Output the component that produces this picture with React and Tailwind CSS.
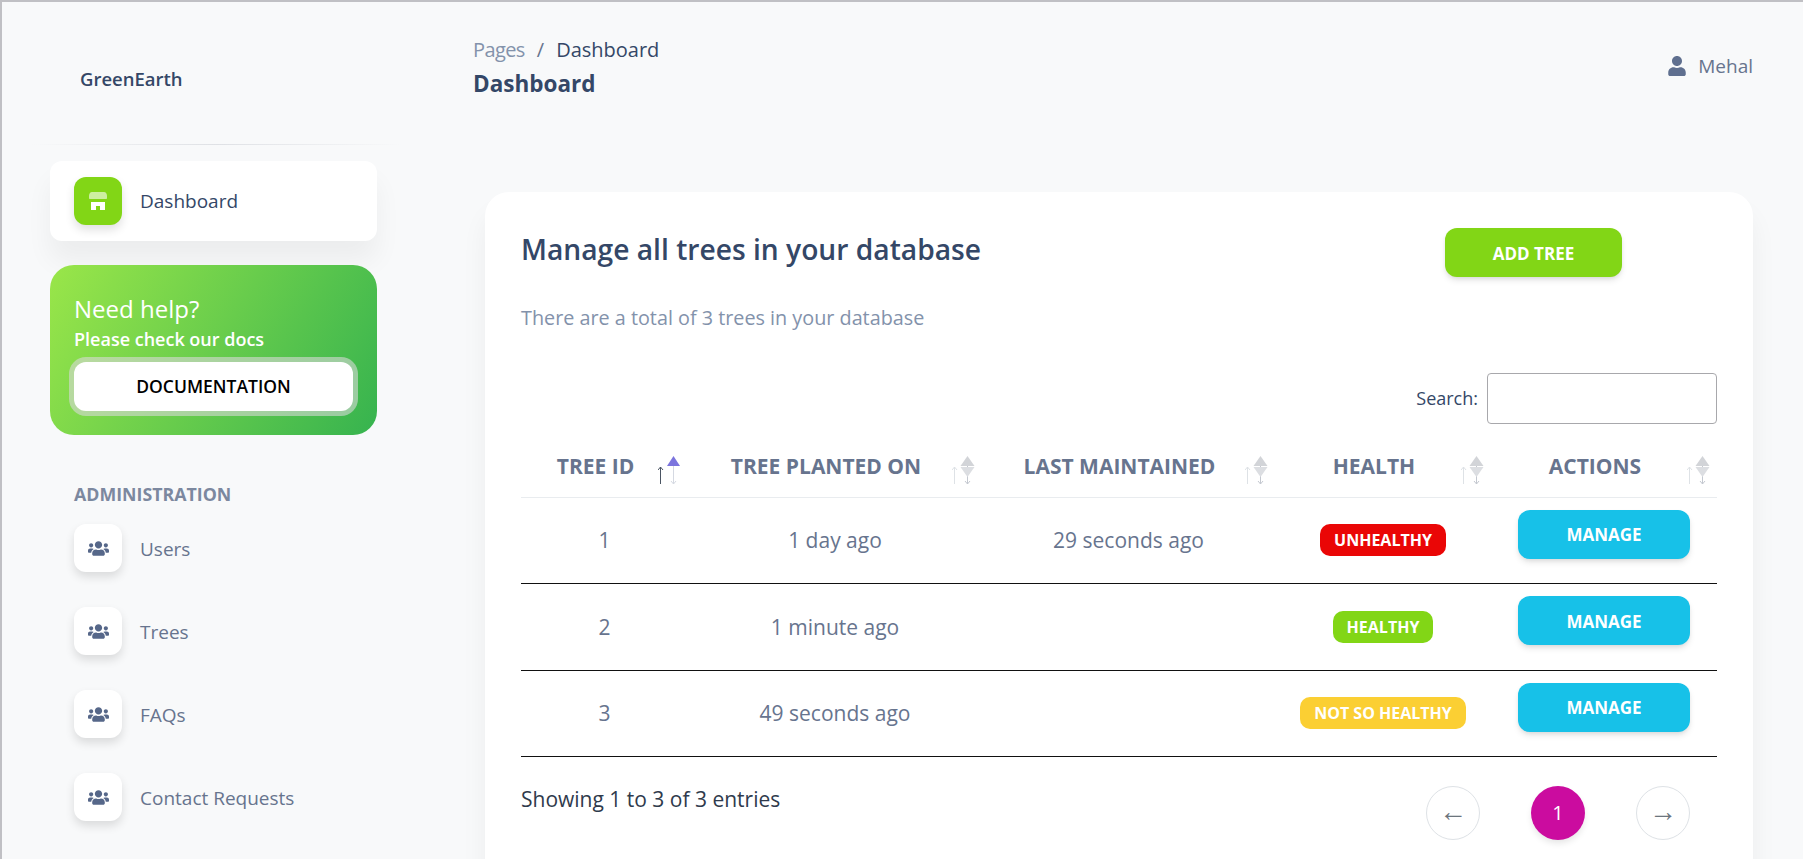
import React from "react";
import { FaUser, FaUsers } from "react-icons/fa";

const menuItems = ["Users", "Trees", "FAQs", "Contact Requests"];

const trees = [
  { id: 1, planted: "1 day ago", maintained: "29 seconds ago", health: "UNHEALTHY", badge: "bg-[#ea0606]", rowH: "h-[86px]" },
  { id: 2, planted: "1 minute ago", maintained: "", health: "HEALTHY", badge: "bg-[#82d616]", rowH: "h-[87px]" },
  { id: 3, planted: "49 seconds ago", maintained: "", health: "NOT SO HEALTHY", badge: "bg-[#fbcf33]", rowH: "h-[86px]" },
];

function ShopIcon() {
  return (
    <svg width="18" height="18" viewBox="0 0 18 18">
      <path d="M3 0h12c2 0 3 2 3 4v2c0 .6-.4 1-1 1H1c-.6 0-1-.4-1-1V4c0-2 1-4 3-4z" fill="#fff" opacity="0.6" />
      <path d="M2 10h14v8h-5v-4H7v4H2z" fill="#fff" />
    </svg>
  );
}

function SortIcon({ active }) {
  return (
    <svg className="absolute right-[6px] top-[25px]" width="24" height="30" viewBox="0 0 24 30">
      <g fill="none" strokeWidth="1">
        <path d="M2.500 29V12M0 15l2.500-3L5 15" stroke={active ? "#4b5563" : "#dee2e6"} />
        <path d="M15.500 29V11M13 26l2.500 3L18 26" stroke={active ? "#d5d9e2" : "#c4c8d0"} />
      </g>
      {active ? (
        <path d="M15.500 1L22 11H9z" fill="#7b74dd" />
      ) : (
        <>
          <path d="M15.500 1L22.500 11H8.500z" fill="#d2d4d8" />
          <path d="M15.500 22L22.500 12H8.500z" fill="#dcdee2" />
        </>
      )}
    </svg>
  );
}

function SidebarLink({ label }) {
  return (
    <div className="flex items-center gap-[18px] pl-[24px]">
      <div className="w-[48px] h-[48px] rounded-[12px] bg-white flex items-center justify-center shadow-[0_5px_10px_rgba(0,0,0,0.12)]">
        <FaUsers className="text-[21px] text-[#566789]" />
      </div>
      <span className="text-[19px] leading-[28px] pt-[2px] text-[#67748e] font-medium">{label}</span>
    </div>
  );
}

export default function App() {
  const headers = ["TREE ID", "TREE PLANTED ON", "LAST MAINTAINED", "HEALTH", "ACTIONS"];

  return (
    <div className="h-screen overflow-hidden flex bg-[#f8f9fa] border-t-2 border-l-2 border-[#c0c0c4] font-['Open_Sans',sans-serif]">
      {/* sidebar */}
      <aside className="w-[425px] shrink-0 pl-[48px]">
        <div className="h-[143px] relative">
          <div className="pl-[30px] pt-[62px] text-[18.500px] leading-[30px] font-semibold text-[#344767]">GreenEarth</div>
          <div className="absolute bottom-0 left-[-18px] w-[370px] h-[1px] bg-linear-to-r from-transparent via-[#dfe1e5] to-transparent"></div>
        </div>

        <div className="w-[327px] mt-[16px] h-[80px] rounded-[12px] bg-white flex items-center gap-[18px] pl-[24px] shadow-[0_20px_27px_rgba(0,0,0,0.05)]">
          <div className="w-[48px] h-[48px] rounded-[12px] bg-[#82d616] flex items-center justify-center shadow-[0_5px_10px_rgba(0,0,0,0.12)]">
            <ShopIcon />
          </div>
          <span className="text-[19px] font-medium text-[#344767]">Dashboard</span>
        </div>

        <div className="w-[327px] h-[170px] mt-[24px] rounded-[24px] pl-[24px] pr-[24px] pt-[29px] bg-linear-[120deg] from-[#9ae649] to-[#36b34f] text-white">
          <div className="text-[24px] leading-[30px]">Need help?</div>
          <div className="text-[18px] leading-[24px] font-semibold mt-[3px]">Please check our docs</div>
          <button className="block w-[279px] h-[49px] mt-[11px] rounded-[12px] bg-white text-[17.500px] font-semibold text-black ring-[5px] ring-[#d8d8d8]/60">
            DOCUMENTATION
          </button>
        </div>

        <div className="pl-[24px] mt-[47px] text-[17.800px] leading-[24px] font-bold text-[#7c889f]">ADMINISTRATION</div>
        <div className="flex flex-col gap-[35px] mt-[18px]">
          {menuItems.map((item) => (
            <SidebarLink key={item} label={item} />
          ))}
        </div>
      </aside>

      {/* main */}
      <main className="flex-1 flex flex-col min-w-0 pr-[50px] pl-[46px]">
        <header className="h-[190px] shrink-0 flex justify-between pt-[33px]">
          <div>
            <div className="text-[20px] leading-[30px] text-[#344767]">
              <span className="text-[#8392ab] tracking-[-0.6px]">Pages</span>
              <span className="text-[#67748e] mx-[12px]">/</span>
              Dashboard
            </div>
            <div className="text-[22.500px] leading-[32px] font-bold text-[#344767] mt-[3px]">Dashboard</div>
          </div>
          <div className="flex items-center gap-[11px] h-[44px] mt-[9px] text-[#67748e] text-[19px]">
            <FaUser className="text-[20px] text-[#5f6f8f]" />
            Mehal
          </div>
        </header>

        <section className="h-[720px] shrink-0 ml-[12px] rounded-[24px] bg-white pl-[36px] pr-[36px] shadow-[0_20px_27px_rgba(0,0,0,0.05)]">
          <div className="flex justify-between items-start pt-[36px]">
            <div>
              <h1 className="text-[28.200px] leading-[40px] mt-[1px] font-semibold text-[#344767]">Manage all trees in your database</h1>
              <p className="text-[19.800px] leading-[30px] mt-[34px] text-[#8392ab]">There are a total of 3 trees in your database</p>
            </div>
            <button className="w-[177px] h-[49px] pt-[2px] mr-[95px] rounded-[12px] bg-[#82d616] text-white text-[17px] font-bold shadow-[0_4px_7px_-1px_rgba(0,0,0,0.11),0_2px_4px_-1px_rgba(0,0,0,0.07)]">
              ADD TREE
            </button>
          </div>

          <div className="flex justify-end items-center gap-[9px] mt-[40px]">
            <label className="text-[18px] text-[#344767]">Search:</label>
            <input className="w-[230px] h-[51px] rounded-[4px] border border-[#a8a8ac] bg-white" />
          </div>

          <table className="w-[1196px] table-fixed border-collapse mt-[6px]">
            <colgroup>
              <col className="w-[167px]" />
              <col className="w-[294px]" />
              <col className="w-[293px]" />
              <col className="w-[216px]" />
              <col className="w-[226px]" />
            </colgroup>
            <thead>
              <tr className="border-b border-[#e9ecef]">
                {headers.map((h, i) => (
                  <th key={h} className="relative h-[67px] pt-[6px] pr-[18px] text-center text-[21px] font-bold text-[#67748e]">
                    {h}
                    <SortIcon active={i === 0} />
                  </th>
                ))}
              </tr>
            </thead>
            <tbody>
              {trees.map((t) => (
                <tr key={t.id} className="border-b border-[#111]">
                  <td className={`${t.rowH} pt-[2px] text-center text-[21px] text-[#67748e]`}>{t.id}</td>
                  <td className="pt-[2px] text-center text-[21px] text-[#67748e]">{t.planted}</td>
                  <td className="pt-[2px] text-center text-[21px] text-[#67748e]">{t.maintained}</td>
                  <td className="text-center">
                    <span className={`inline-block h-[32px] leading-[32px] px-[14px] rounded-[10px] text-white text-[16px] font-bold ${t.badge}`}>
                      {t.health}
                    </span>
                  </td>
                  <td className="text-center">
                    <button className="w-[172px] h-[49px] pt-[2px] mb-[12px] rounded-[12px] bg-[#17c1e8] text-white text-[17px] font-bold shadow-[0_4px_7px_-1px_rgba(0,0,0,0.11),0_2px_4px_-1px_rgba(0,0,0,0.07)]">
                      MANAGE
                    </button>
                  </td>
                </tr>
              ))}
            </tbody>
          </table>

          <div className="flex justify-between items-start">
            <div className="mt-[27px] text-[21px] leading-[30px] text-[#2f3a4c]">Showing 1 to 3 of 3 entries</div>
            <div className="flex gap-[51px] mt-[29px] pr-[27px]">
              <div className="w-[54px] h-[54px] pb-[6px] rounded-full border border-[#dee2e6] flex items-center justify-center text-[28px] text-[#6c757d]">←</div>
              <div className="w-[54px] h-[54px] rounded-full bg-[#cb0c9f] flex items-center justify-center text-[20px] text-white shadow-[0_4px_7px_-1px_rgba(0,0,0,0.11)]">1</div>
              <div className="w-[54px] h-[54px] pb-[6px] rounded-full border border-[#dee2e6] flex items-center justify-center text-[28px] text-[#6c757d]">→</div>
            </div>
          </div>
        </section>
      </main>
    </div>
  );
}
